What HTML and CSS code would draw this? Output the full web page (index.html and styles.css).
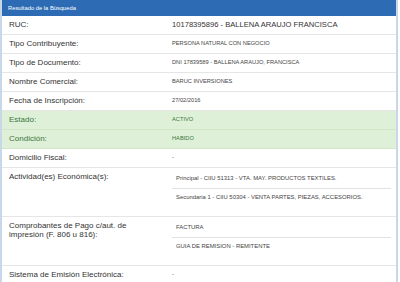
FILE: index.html
```html
<!DOCTYPE html>
<html lang="es">
<head>
<meta charset="utf-8">
<title>Resultado de la Búsqueda</title>
<link rel="stylesheet" href="styles.css">
</head>
<body>
<div class="panel">
  <div class="panel-heading">Resultado de la Búsqueda</div>
  <div class="row">
    <div class="label">RUC:</div>
    <div class="value big">10178395896 - BALLENA ARAUJO FRANCISCA</div>
  </div>
  <div class="row">
    <div class="label">Tipo Contribuyente:</div>
    <div class="value">PERSONA NATURAL CON NEGOCIO</div>
  </div>
  <div class="row">
    <div class="label">Tipo de Documento:</div>
    <div class="value">DNI 17839589 - BALLENA ARAUJO, FRANCISCA</div>
  </div>
  <div class="row">
    <div class="label">Nombre Comercial:</div>
    <div class="value">BARUC INVERSIONES</div>
  </div>
  <div class="row">
    <div class="label">Fecha de Inscripción:</div>
    <div class="value">27/02/2016</div>
  </div>
  <div class="row success">
    <div class="label">Estado:</div>
    <div class="value">ACTIVO</div>
  </div>
  <div class="row success">
    <div class="label">Condición:</div>
    <div class="value">HABIDO</div>
  </div>
  <div class="row">
    <div class="label">Domicilio Fiscal:</div>
    <div class="value">-</div>
  </div>
  <div class="row">
    <div class="label">Actividad(es) Económica(s):</div>
    <div class="value list-cell">
      <ul class="list">
        <li>Principal - CIIU 51313 - VTA. MAY. PRODUCTOS TEXTILES.</li>
        <li>Secundaria 1 - CIIU 50304 - VENTA PARTES, PIEZAS, ACCESORIOS.</li>
      </ul>
    </div>
  </div>
  <div class="row">
    <div class="label">Comprobantes de Pago c/aut. de impresión (F. 806 u 816):</div>
    <div class="value list-cell">
      <ul class="list">
        <li>FACTURA</li>
        <li>GUIA DE REMISION - REMITENTE</li>
      </ul>
    </div>
  </div>
  <div class="row">
    <div class="label">Sistema de Emisión Electrónica:</div>
    <div class="value">-</div>
  </div>
</div>
</body>
</html>
```

FILE: styles.css
```css
html, body {
  margin: 0;
  padding: 0;
  background: #ffffff;
}

body {
  font-family: "Liberation Sans", Arial, Helvetica, sans-serif;
  color: #333333;
}

.panel {
  width: 398px;
  height: 282px;
  box-sizing: border-box;
  border-left: 2px solid #c9d8e8;
  border-right: 2px solid #c9d8e8;
  overflow: hidden;
}

.panel-heading {
  height: 16px;
  line-height: 16px;
  background: #2d6cb5;
  color: #ffffff;
  font-size: 5.8px;
  padding-left: 6px;
}

.row {
  display: grid;
  grid-template-columns: 163px 1fr;
  border-bottom: 1px solid #e6e6e6;
}

.label {
  padding: 4px 7px 5px 7px;
  font-size: 8px;
  line-height: 9px;
}

.value {
  padding: 4px 5px 5px 7px;
  font-size: 5.7px;
  line-height: 9px;
  color: #444444;
}

.value.big {
  font-size: 7.6px;
  color: #333333;
}

.success {
  background: #dff0d8;
  border-bottom-color: #d2e6c8;
}

.success .label,
.success .value {
  color: #3c763d;
}

.list-cell {
  padding: 2px 5px 9px 7px;
  font-size: 5.9px;
}

.list {
  list-style: none;
  margin: 0;
  padding: 0;
}

.list li {
  padding: 4px 4px 5px 4px;
  line-height: 9px;
}

.list li + li {
  border-top: 1px solid #e2e2e2;
}
```
